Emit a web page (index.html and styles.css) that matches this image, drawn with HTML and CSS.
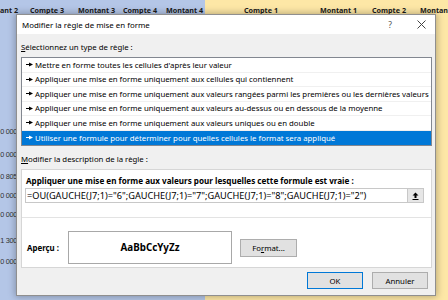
FILE: index.html
```html
<!DOCTYPE html>
<html lang="fr">
<head>
<meta charset="utf-8">
<link rel="stylesheet" href="styles.css">
</head>
<body>
<div class="sheet">
  <div class="pane pane-blue">
    <div class="hdr hdr-blue">
      <span class="c0">ant 2</span>
      <span class="c1">Compte 3</span>
      <span class="c2">Montant 3</span>
      <span class="c3">Compte 4</span>
      <span class="c4">Montant 4</span>
    </div>
    <div class="nums">
      <div class="num">0 000</div>
      <div class="num">0 000</div>
      <div class="num">0 805</div>
      <div class="num">0 000</div>
      <div class="num">0 000</div>
      <div class="num">1 300</div>
      <div class="num">0 000</div>
    </div>
  </div>
  <div class="pane pane-yellow">
    <div class="hdr hdr-yellow">
      <span class="y1">Compte 1</span>
      <span class="y2">Montant 1</span>
      <span class="y3">Compte 2</span>
      <span class="y4">Montan</span>
    </div>
  </div>
</div>

<div class="dialog">
  <div class="titlebar">
    <span class="title">Modifier la règle de mise en forme</span>
    <span class="tb-help">?</span>
    <span class="tb-close"><svg width="9" height="9" viewBox="0 0 9 9"><path d="M0.5 0.5L8.5 8.5M8.5 0.5L0.5 8.5" stroke="#444" stroke-width="1" fill="none"/></svg></span>
  </div>
  <div class="body">
    <div class="label"><u>S</u>électionnez un type de règle :</div>
    <div class="listbox">
      <div class="row"><svg class="arr" width="7" height="5" viewBox="0 0 7 5"><path d="M0 2.5H3.5" stroke="currentColor" stroke-width="1"/><path d="M3 0.5L7 2.5L3 4.5Z" fill="currentColor"/></svg><span>Mettre en forme toutes les cellules d'après leur valeur</span></div>
      <div class="row"><svg class="arr" width="7" height="5" viewBox="0 0 7 5"><path d="M0 2.5H3.5" stroke="currentColor" stroke-width="1"/><path d="M3 0.5L7 2.5L3 4.5Z" fill="currentColor"/></svg><span>Appliquer une mise en forme uniquement aux cellules qui contiennent</span></div>
      <div class="row"><svg class="arr" width="7" height="5" viewBox="0 0 7 5"><path d="M0 2.5H3.5" stroke="currentColor" stroke-width="1"/><path d="M3 0.5L7 2.5L3 4.5Z" fill="currentColor"/></svg><span>Appliquer une mise en forme uniquement aux valeurs rangées parmi les premières ou les dernières valeurs</span></div>
      <div class="row"><svg class="arr" width="7" height="5" viewBox="0 0 7 5"><path d="M0 2.5H3.5" stroke="currentColor" stroke-width="1"/><path d="M3 0.5L7 2.5L3 4.5Z" fill="currentColor"/></svg><span>Appliquer une mise en forme uniquement aux valeurs au-dessus ou en dessous de la moyenne</span></div>
      <div class="row"><svg class="arr" width="7" height="5" viewBox="0 0 7 5"><path d="M0 2.5H3.5" stroke="currentColor" stroke-width="1"/><path d="M3 0.5L7 2.5L3 4.5Z" fill="currentColor"/></svg><span>Appliquer une mise en forme uniquement aux valeurs uniques ou en double</span></div>
      <div class="row selected"><svg class="arr" width="7" height="5" viewBox="0 0 7 5"><path d="M0 2.5H3.5" stroke="currentColor" stroke-width="1"/><path d="M3 0.5L7 2.5L3 4.5Z" fill="currentColor"/></svg><span>Utiliser une formule pour déterminer pour quelles cellules le format sera appliqué</span></div>
    </div>
    <div class="label"><u>M</u>odifier la description de la règle :</div>
    <div class="descbox">
      <div class="desc-title">Appliquer une mise en forme aux valeurs pour lesquelles cette formule est vraie :</div>
      <div class="formula">
        <span class="formula-text">=OU(GAUCHE(J7;1)="6";GAUCHE(J7;1)="7";GAUCHE(J7;1)="8";GAUCHE(J7;1)="2")</span>
        <span class="collapse"><svg width="7" height="8" viewBox="0 0 7 8"><path d="M3.5 0.5L6.5 3.5H4.5V6H2.5V3.5H0.5Z" fill="#000"/><path d="M0.5 7.5H6.5" stroke="#000" stroke-width="1"/></svg></span>
      </div>
      <div class="sep"></div>
      <div class="preview-row">
        <span class="preview-label">Aperçu :</span>
        <div class="preview-box">AaBbCcYyZz</div>
        <button class="btn btn-format">Fo<u>r</u>mat...</button>
      </div>
    </div>
    <div class="actions">
      <button class="btn btn-ok">OK</button>
      <button class="btn">Annuler</button>
    </div>
  </div>
</div>
</body>
</html>
```
FILE: styles.css
```css
* { box-sizing: border-box; }
html, body { margin: 0; padding: 0; }
body {
  width: 448px;
  height: 300px;
  overflow: hidden;
  position: relative;
  font-family: "Noto Sans", "Open Sans", sans-serif;
  font-size: 7.8px;
  color: #000;
}

/* spreadsheet background */
.sheet { display: flex; height: 300px; }
.pane-blue { width: 205px; background: #b4c6e7; }
.pane-yellow { flex: 1; background: #fde7a6; }
.hdr {
  display: flex;
  height: 14px;
  align-items: center;
  white-space: nowrap;
  overflow: hidden;
  font-weight: bold;
  font-size: 7.2px;
  color: #1a1a1a;
  padding-top: 5px;
}
.hdr span { flex: none; }
.c0 { width: 30px; }
.c1 { width: 48px; }
.c2 { width: 45px; }
.c3 { width: 43px; }
.hdr-yellow { padding-left: 39px; }
.y1 { width: 76px; }
.y2 { width: 52px; }
.y3 { width: 48px; }

.nums {
  width: 17px;
  font-family: "Liberation Sans", Arial, sans-serif;
  font-size: 7.3px;
  letter-spacing: -0.3px;
  color: #333;
}
.num { height: 10px; line-height: 10px; text-align: right; white-space: nowrap; }
.num:nth-child(1) { margin-top: 113px; }
.num:nth-child(2) { margin-top: 13px; }
.num:nth-child(3) { margin-top: 12px; }
.num:nth-child(4) { margin-top: 9px; }
.num:nth-child(5) { margin-top: 9px; }
.num:nth-child(6) { margin-top: 16px; }
.num:nth-child(7) { margin-top: 11px; }

/* dialog */
.dialog {
  position: absolute;
  left: 16px;
  top: 14px;
  width: 420px;
  height: 282px;
  border: 1px solid #8f8f8f;
  background: #f0f0f0;
  box-shadow: 0 0 7px 1px rgba(0, 0, 0, 0.28);
  display: flex;
  flex-direction: column;
}
.titlebar {
  height: 19px;
  background: #fff;
  display: flex;
  align-items: center;
  padding-left: 5px;
  font-size: 7.9px;
}
.title { flex: 1; }
.tb-help { width: 10px; text-align: center; color: #555; margin-right: 22px; font-size: 8.6px; }
.tb-close { width: 9px; height: 9px; display: flex; margin-right: 9px; }

.body { padding: 0 3px 0 4px; display: flex; flex-direction: column; }
.label { height: 23px; line-height: 14px; padding-top: 6px; }

.listbox {
  height: 89px;
  border: 1px solid #828790;
  background: #fff;
  display: flex;
  flex-direction: column;
  overflow: hidden;
}
.row {
  height: 14.5px;
  flex: none;
  display: flex;
  align-items: center;
  white-space: nowrap;
  border-bottom: 1px solid #f0f0f0;
  padding-left: 4px;
}
.row:last-child { border-bottom: none; }
.arr { flex: none; margin-right: 2px; color: #000; }
.row.selected { background: #0078d7; color: #fff; }
.row.selected .arr { color: #fff; }

.descbox {
  height: 99px;
  border: 1px solid #d6d6d6;
  background: #fff;
  display: flex;
  flex-direction: column;
}
.desc-title { font-weight: bold; font-size: 8.1px; line-height: 14px; padding: 4px 0 0 4px; height: 18px; white-space: nowrap; }
.formula {
  margin: 0 7px 0 3px;
  height: 15px;
  border: 1px solid #c8c8c8;
  display: flex;
  align-items: center;
  background: #fff;
}
.formula-text { flex: 1; padding-left: 1px; white-space: nowrap; overflow: hidden; font-size: 9.2px; }
.collapse {
  width: 16px;
  height: 13px;
  background: #e6e6e6;
  border-left: 1px solid #c8c8c8;
  display: flex;
  align-items: center;
  justify-content: center;
}
.sep { height: 1px; background: #e3e3e3; margin-top: 14px; }
.preview-row {
  margin-top: 13px;
  display: flex;
  align-items: center;
  padding-left: 5px;
}
.preview-label { font-weight: bold; font-size: 7.9px; width: 41px; }
.preview-box {
  width: 164px;
  height: 33px;
  border: 1px solid #a8a8a8;
  display: flex;
  align-items: center;
  justify-content: center;
  font-weight: bold;
  font-size: 9.8px;
}
.btn {
  font-family: inherit;
  font-size: 7.8px;
  color: #000;
  background: #e1e1e1;
  border: 1px solid #adadad;
  height: 17px;
  width: 56px;
  padding: 0;
  display: flex;
  align-items: center;
  justify-content: center;
}
.btn-format { margin-left: 8px; width: 57px; height: 18px; }
.actions {
  display: flex;
  justify-content: flex-end;
  gap: 9px;
  margin-top: 4px;
  padding-right: 4px;
}
.btn-ok { border-color: #0078d7; }
```
